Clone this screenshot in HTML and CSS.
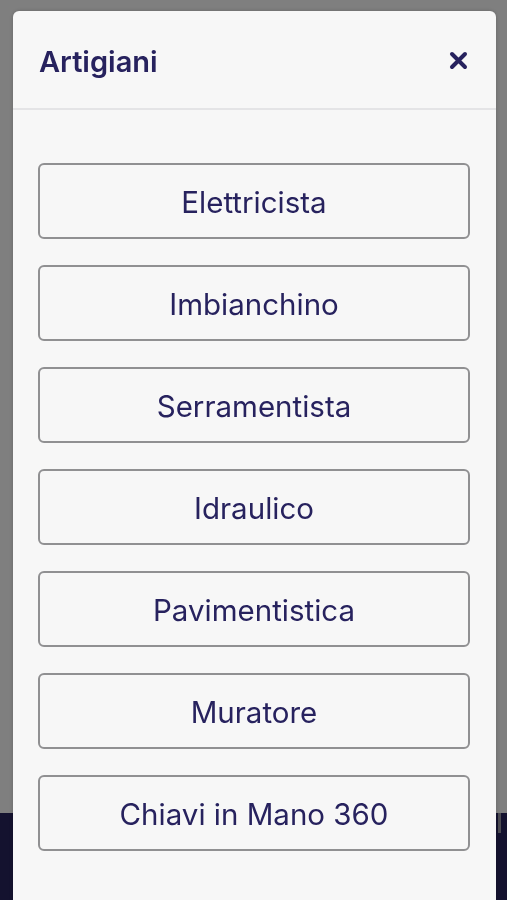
FILE: index.html
```html
<!DOCTYPE html>
<html lang="it">

<head>
    <meta charset="UTF-8">
    <meta name="viewport" content="width=device-width, initial-scale=1.0">
    <title>Artigiani</title>
    <link rel="stylesheet" href="styles.css">
</head>

<body>
    <div class="page">
        <div class="page-bar">
            <span class="page-bar-mark"></span>
        </div>
    </div>

    <div class="overlay">
        <div class="modal">
            <div class="modal-header">
                <h2 class="modal-title">Artigiani</h2>
                <button class="modal-close" type="button" aria-label="Chiudi">
                    <svg width="19" height="19" viewBox="0 0 19 19">
                        <path d="M3 3 L16 16 M16 3 L3 16" stroke="#27225e" stroke-width="4" stroke-linecap="round" fill="none" />
                    </svg>
                </button>
            </div>
            <div class="modal-body">
                <button class="choice" type="button">Elettricista</button>
                <button class="choice" type="button">Imbianchino</button>
                <button class="choice" type="button">Serramentista</button>
                <button class="choice" type="button">Idraulico</button>
                <button class="choice" type="button">Pavimentistica</button>
                <button class="choice" type="button">Muratore</button>
                <button class="choice" type="button">Chiavi in Mano 360</button>
            </div>
        </div>
    </div>
</body>

</html>
```

FILE: styles.css
```css
body {
    font-family: Inter, "Noto Sans", Arial, sans-serif;
    margin: 0;
    padding: 0;
    background-color: #fff;
    height: 900px;
    overflow: hidden;
}

.page {
    height: 900px;
    display: flex;
    flex-direction: column;
    justify-content: flex-end;
}

.page-bar {
    height: 87px;
    background-color: #28245e;
    display: flex;
    justify-content: flex-end;
    padding-right: 6px;
}

.page-bar-mark {
    width: 3px;
    height: 20px;
    background-color: #9a99a6;
}

.overlay {
    position: fixed;
    top: 0;
    left: 0;
    right: 0;
    bottom: 0;
    background-color: rgba(0, 0, 0, 0.5);
}

.modal {
    margin: 11px 0 0 13px;
    width: 483px;
    height: 920px;
    background-color: #f7f7f7;
    border-radius: 6px 6px 0 0;
    box-shadow: 0 0 4px rgba(0, 0, 0, 0.2);
}

.modal-header {
    height: 97px;
    display: flex;
    align-items: center;
    justify-content: space-between;
    padding: 0 28px 0 26px;
    border-bottom: 2px solid #e4e4e6;
}

.modal-title {
    margin: 0;
    font-size: 29px;
    font-weight: 600;
    color: #27225e;
    margin-top: 4px;
}

.modal-close {
    border: none;
    background: none;
    padding: 0;
    width: 19px;
    height: 19px;
    cursor: pointer;
    margin-top: 1px;
}

.modal-close svg {
    display: block;
}

.modal-body {
    padding: 53px 26px 0 25px;
    display: flex;
    flex-direction: column;
    gap: 26px;
}

.choice {
    height: 76px;
    width: 100%;
    padding: 2px 0 0;
    background-color: #f7f7f7;
    border: 2px solid #909092;
    border-radius: 6px;
    font-family: Inter, "Noto Sans", Arial, sans-serif;
    font-size: 29.5px;
    font-weight: 400;
    color: #27225e;
    cursor: pointer;
}
```
